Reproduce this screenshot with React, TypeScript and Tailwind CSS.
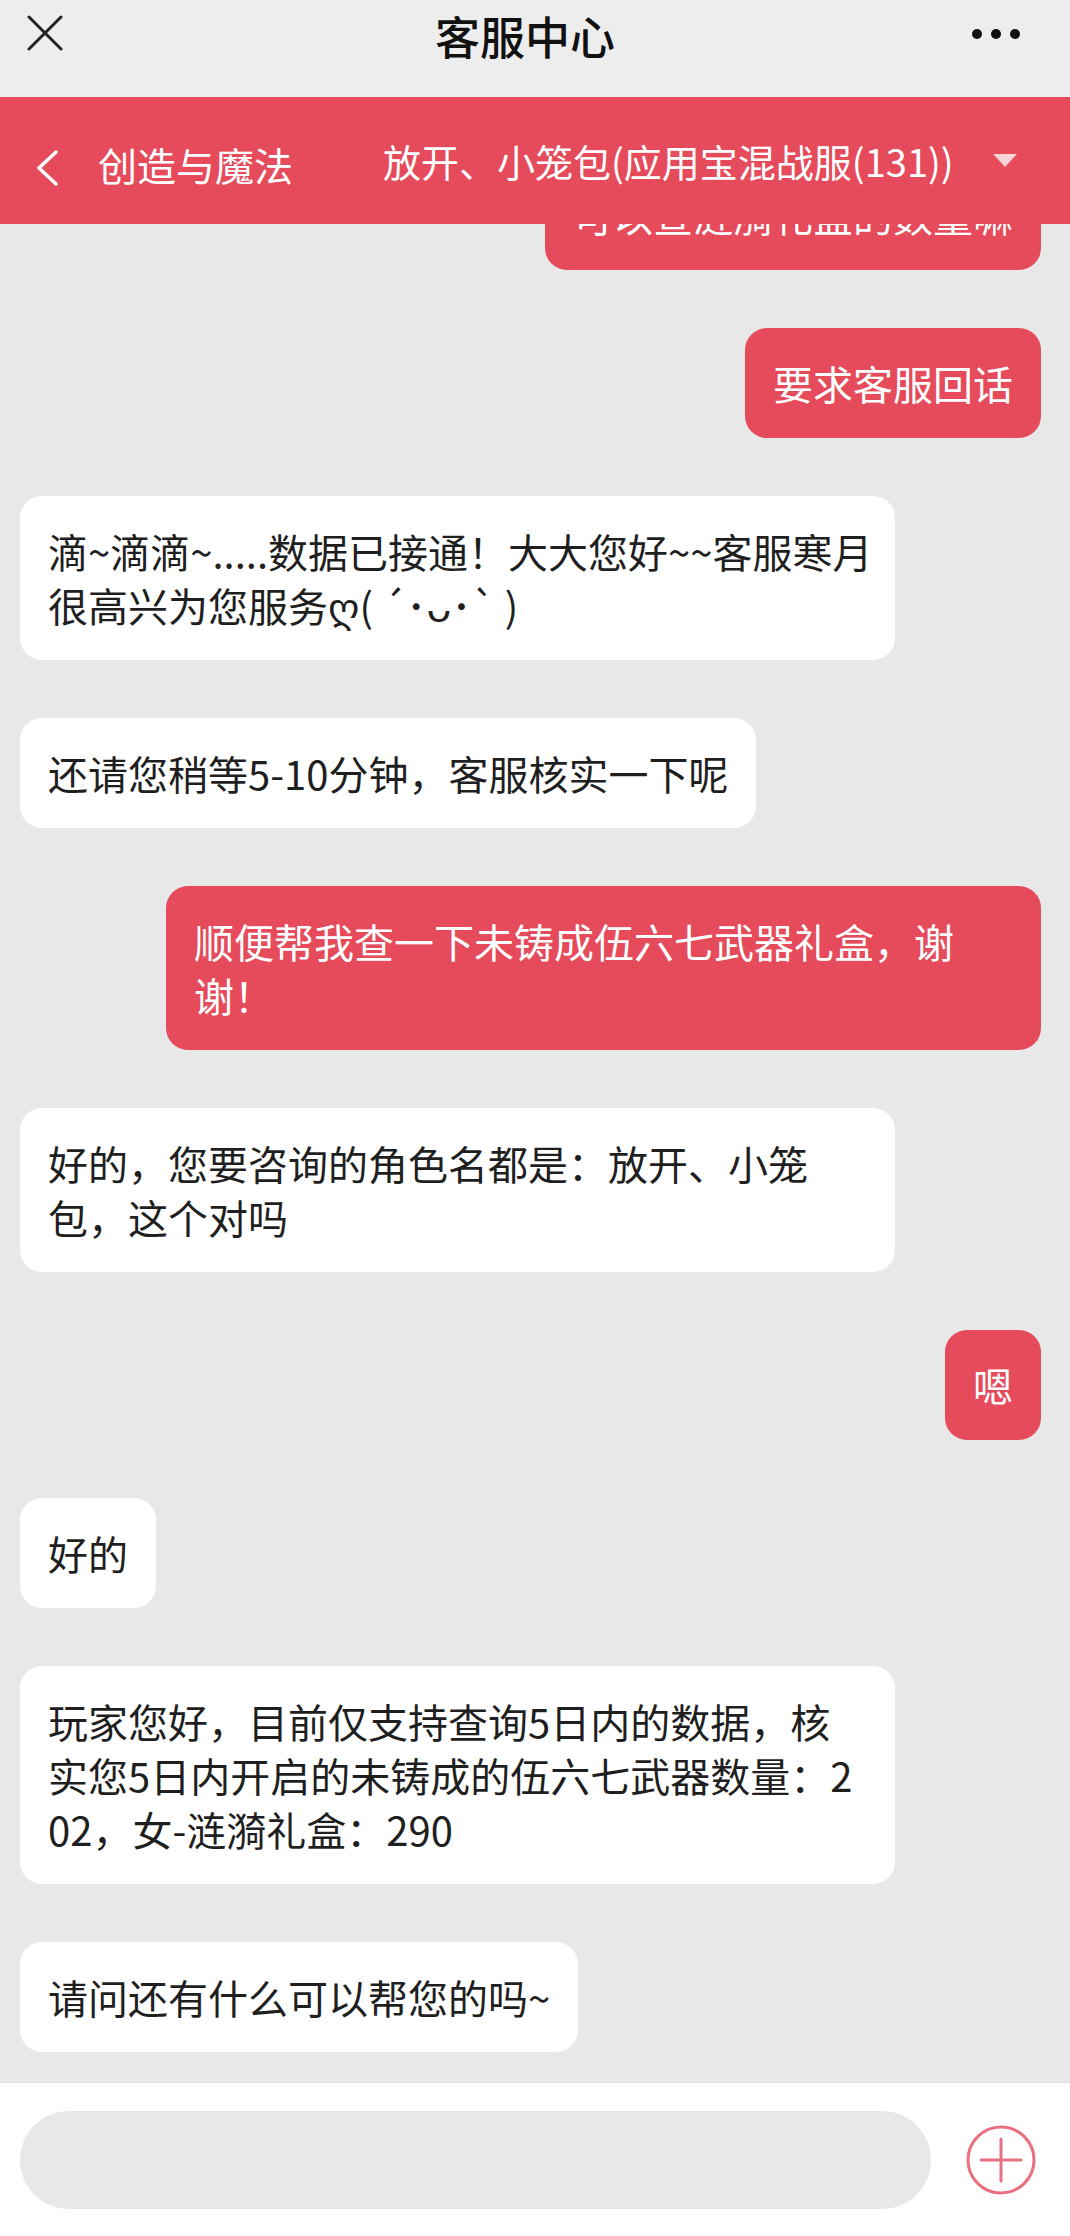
import React from "react"

type Msg = { id: number; mine: boolean; lines: string[]; wide?: boolean }

const messages: Msg[] = [
  { id: 1, mine: true, lines: ["可以查涟漪礼盒的数量嘛"] },
  { id: 2, mine: true, lines: ["要求客服回话"] },
  { id: 3, mine: false, wide: true, lines: ["滴~滴滴~.....数据已接通！大大您好~~客服寒月", "很高兴为您服务ღ( ´･ᴗ･` )"] },
  { id: 4, mine: false, lines: ["还请您稍等5-10分钟，客服核实一下呢"] },
  { id: 5, mine: true, wide: true, lines: ["顺便帮我查一下未铸成伍六七武器礼盒，谢", "谢！"] },
  { id: 6, mine: false, wide: true, lines: ["好的，您要咨询的角色名都是：放开、小笼", "包，这个对吗"] },
  { id: 7, mine: true, lines: ["嗯"] },
  { id: 8, mine: false, lines: ["好的"] },
  {
    id: 9,
    mine: false,
    wide: true,
    lines: ["玩家您好，目前仅支持查询5日内的数据，核", "实您5日内开启的未铸成的伍六七武器数量：2", "02，女-涟漪礼盒：290"],
  },
  { id: 10, mine: false, lines: ["请问还有什么可以帮您的吗~"] },
]

function Bubble({ msg, first }: { msg: Msg; first: boolean }) {
  return (
    <div
      className={
        (msg.mine ? "self-end bg-[#e54b5b] text-white " : "self-start bg-white text-[#1f1f1f] ") +
        (msg.wide ? "w-[875px] " : "w-fit ") +
        (first ? "-mt-[64px] " : "") +
        "rounded-[22px] px-[28px] py-[28px] text-[40px] leading-[54px] whitespace-nowrap"
      }
    >
      {msg.lines.map((l, i) => (
        <div key={i}>{l}</div>
      ))}
    </div>
  )
}

export default function App() {
  return (
    <div
      className="flex flex-col w-[1070px] h-[2236px] bg-[#e8e8e8] overflow-hidden"
      style={{ fontFamily: '"Noto Sans CJK SC", "Noto Sans", "DejaVu Sans", sans-serif' }}
    >
      {/* top bar */}
      <div className="relative flex items-start justify-between h-[97px] bg-[#ededed] pl-[27px] pr-[50px] pt-[15px]">
        <svg width="36" height="36" viewBox="0 0 36 36">
          <path d="M2 2 L34 34 M34 2 L2 34" stroke="#222" strokeWidth="3" strokeLinecap="round" />
        </svg>
        <div className="absolute left-0 right-0 top-0 h-[70px] flex items-center justify-center pointer-events-none">
          <span className="text-[45px] leading-none font-medium text-[#111] mr-[20px]">客服中心</span>
        </div>
        <div className="flex items-center gap-[9px] mt-[14px]">
          <span className="w-[10px] h-[10px] rounded-full bg-[#111]" />
          <span className="w-[10px] h-[10px] rounded-full bg-[#111]" />
          <span className="w-[10px] h-[10px] rounded-full bg-[#111]" />
        </div>
      </div>

      {/* red role bar */}
      <div className="relative z-10 flex items-center h-[127px] bg-[#e54b5b] pl-[35px] pr-[53px] text-white">
        <svg width="24" height="36" viewBox="0 0 24 36" className="mt-[14px]">
          <path d="M21 2 L4 18 L21 34" stroke="#fff" strokeWidth="3.5" fill="none" strokeLinecap="round" strokeLinejoin="round" />
        </svg>
        <span className="ml-[39px] text-[39px] leading-none mt-[8px]">创造与魔法</span>
        <span className="ml-[90px] text-[38px] leading-none">放开、小笼包(应用宝混战服(131))</span>
        <svg width="24" height="14" viewBox="0 0 24 14" className="ml-auto">
          <path d="M0 0 L24 0 L12 13 Z" fill="#f9d2d7" />
        </svg>
      </div>

      {/* messages */}
      <div className="flex-1 overflow-hidden flex flex-col gap-[58px] pl-[20px] pr-[29px]">
        {messages.map((m, i) => (
          <Bubble key={m.id} msg={m} first={i === 0} />
        ))}
      </div>

      {/* input bar */}
      <div className="flex items-center h-[154px] bg-white border-t border-[#dedede] pl-[20px] pr-[33px]">
        <div className="w-[911px] h-[98px] rounded-full bg-[#e8e8e8]" />
        <svg width="72" height="72" viewBox="0 0 72 72" className="ml-auto">
          <circle cx="36" cy="36" r="33" stroke="#e8707f" strokeWidth="3" fill="none" />
          <path d="M36 15 L36 57 M16 36 L56 36" stroke="#e8707f" strokeWidth="3" strokeLinecap="round" />
        </svg>
      </div>
    </div>
  )
}
